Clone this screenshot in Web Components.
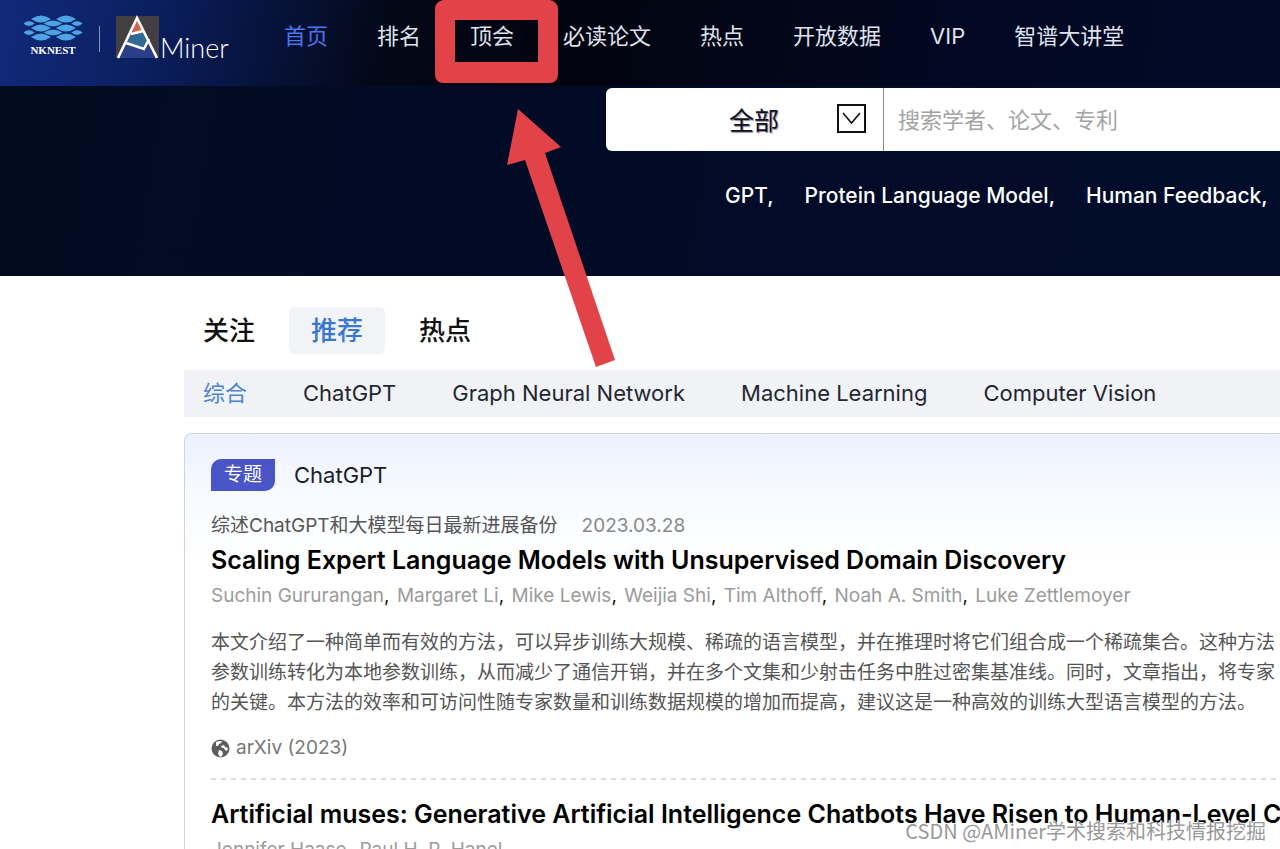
<!DOCTYPE html>
<html lang="zh-CN">
<head>
<meta charset="utf-8">
<title>AMiner</title>
<style>
  body { margin: 0; font-family: Inter, "Noto Sans CJK SC", sans-serif; background: #fff; color: #111; }
</style>
</head>
<body>
<aminer-page></aminer-page>
<script>
const define = (name, html, setup) => {
  const template = document.createElement('template');
  template.innerHTML = html;
  customElements.define(name, class extends HTMLElement {
    constructor() {
      super();
      this.attachShadow({ mode: 'open' }).append(template.content.cloneNode(true));
    }
    connectedCallback() { if (setup) setup(this.shadowRoot, this); }
  });
};

define('brand-logos', `
<style>
  :host { display: flex; align-items: flex-start; }
  svg { display: block; flex: none; }
  a { display: flex; color: #fff; text-decoration: none; }
  .nest { flex-direction: column; align-items: center; width: 60px; margin-top: 15px; }
  .nest span { font: 900 11px/16px "Liberation Serif", serif; margin-top: 1px; }
  i { width: 1px; height: 26px; margin: 26px 16px 0; background: #8b93b8; }
  .am { margin-top: 15px; }
  .am span { font: 300 27px/32px Lato, sans-serif; margin-top: 17px; }
</style>
<a class="nest" href="#"><svg width="60" height="26" viewBox="0 0 60 26" fill="#4ea3e6">
  <path d="M8 4Q18-3 28 4Q18 11 8 4M33 4Q43-3 53 4Q43 11 33 4M0 8.500Q6 3 12 8.500Q6 14 0 8.500M20 8.500Q30 2 40 8.500Q30 15 20 8.500M48 8.500Q54 3 60 8.500Q54 14 48 8.500M8 13Q18 6 28 13Q18 20 8 13M33 13Q43 6 53 13Q43 20 33 13M0 17.500Q6 12 12 17.500Q6 23 0 17.500M20 17.500Q30 11 40 17.500Q30 24 20 17.500M48 17.500Q54 12 60 17.500Q54 23 48 17.500M8 22Q18 15 28 22Q18 29 8 22M33 22Q43 15 53 22Q43 29 33 22"/>
  <path d="M0 8.500Q6 3 12 8.500Q6 14 0 8.500M20 8.500Q30 2 40 8.500Q30 15 20 8.500M48 8.500Q54 3 60 8.500Q54 14 48 8.500M0 17.500Q6 12 12 17.500Q6 23 0 17.500M20 17.500Q30 11 40 17.500Q30 24 20 17.500M48 17.500Q54 12 60 17.500Q54 23 48 17.500" fill="none" stroke="#10286c" stroke-width="0.700"/>
</svg><span>NKNEST</span></a>
<i></i>
<a class="am" href="#"><svg width="44" height="44" viewBox="0 0 44 44">
  <path d="M0 1H43V43H0Z" fill="#443f42"/>
  <path d="M21 4L28 18L15 20Z" fill="#d9604a"/><path d="M15 20L28 17L32 27L28 35L10 30Z" fill="#2f6b94"/>
  <path d="M10 29L28 34L33 28L40 43H3Z" fill="#2b3e86"/>
  <path d="M2 43L21 3L41 43M15 19L27 16M10 28L28 34L33 24" fill="none" stroke="#fff" stroke-width="2.600"/>
</svg><span>Miner</span></a>`);

define('site-nav', `
<style>
  :host { display: block; }
  nav { display: flex; gap: 49px; }
  a { color: #dfe2ec; font-size: 22px; line-height: 32px; white-space: nowrap; text-decoration: none; }
  a[aria-current] { color: #4a74f0; }
</style>
<nav><a href="#" aria-current="page">首页</a><a href="#">排名</a><a href="#">顶会</a><a href="#">必读论文</a><a href="#">热点</a><a href="#">开放数据</a><a href="#">VIP</a><a href="#">智谱大讲堂</a></nav>`);

define('search-bar', `
<style>
  :host { display: flex; height: 63px; background: #fff; border-radius: 6px 0 0 6px; overflow: hidden; }
  .scope { display: grid; width: 277px; flex: none; border-right: 1px solid #8a8c94; align-items: center; }
  .scope > * { grid-area: 1 / 1; }
  select { appearance: none; border: 0; outline: 0; background: none; width: 100%; height: 100%; padding: 3px 0 0 123px; font: 25px Inter, "Noto Sans CJK SC", sans-serif; color: #10131f; text-shadow: 1px 1px 1px #8888a0; }
  svg { justify-self: end; margin: 0 17px 2px 0; pointer-events: none; }
  input { flex: 1; min-width: 0; border: 0; outline: 0; padding: 1px 14px 0; font: 22px Inter, "Noto Sans CJK SC", sans-serif; }
  input::placeholder { color: #a3a3a3; opacity: 1; }
</style>
<div class="scope"><select aria-label="搜索范围"><option>全部</option></select>
<svg width="29" height="29" viewBox="0 0 29 29" fill="none" stroke="#111" stroke-width="2"><path d="M1 1H28V28H1Z"/><path d="M6 9L14.500 19L23 9" stroke-width="1.600"/></svg></div>
<input type="search" aria-label="搜索" placeholder="搜索学者、论文、专利">`);

define('site-header', `
<style>
  :host { display: block; height: 276px; overflow: hidden; background: linear-gradient(100deg, #020c20 0, #020b26 50%, #020d2c 100%); }
  .bar { display: flex; height: 86px; background: linear-gradient(100deg, #11297a 0, #0b1f5f 12%, #071440 20%, #030818 30%, #02040f 45%, #020822 75%, #020a28 100%); }
  brand-logos { flex: none; width: 261px; padding-left: 23px; }
  site-nav { margin-top: 20px; }
  search-bar { margin: 2px 0 0 606px; }
  .hot { display: flex; gap: 31px; margin: 31px 0 0 725px; }
  .hot a { color: #fff; font-size: 21px; font-weight: 500; line-height: 28px; white-space: nowrap; text-decoration: none; }
</style>
<div class="bar"><brand-logos></brand-logos><site-nav></site-nav></div>
<search-bar></search-bar>
<div class="hot"><a href="#">GPT,</a><a href="#">Protein Language Model,</a><a href="#">Human Feedback,</a></div>`);

define('feed-tabs', `
<style>
  :host { display: block; padding-top: 31px; }
  .main { display: flex; gap: 12px; }
  button { font: 500 26px/47px Inter, "Noto Sans CJK SC", sans-serif; color: #111; background: none; border: 0; border-radius: 6px; padding: 0 22px; }
  .main button:first-child { padding-left: 19px; }
  .main .on { background: #f1f3f7; color: #3a78d0; }
  .sub { display: flex; gap: 56px; margin-top: 16px; padding-left: 19px; background: #f1f2f6; }
  .sub a { font-size: 22px; line-height: 47px; color: #23262f; text-decoration: none; white-space: nowrap; }
  .sub a.on { color: #4a86cc; }
</style>
<div class="main"><button>关注</button><button class="on">推荐</button><button>热点</button></div>
<nav class="sub"><a class="on" href="#">综合</a><a href="#">ChatGPT</a><a href="#">Graph Neural Network</a><a href="#">Machine Learning</a><a href="#">Computer Vision</a></nav>`);

define('paper-item', `
<style>
  :host { display: block; white-space: nowrap; }
  h2 { margin: 0; font-size: 25px; line-height: 36px; font-weight: 600; color: #000; }
  .authors { font-size: 19px; line-height: 36px; color: #111; }
  .authors a { color: #9b9b9b; text-decoration: none; }
  .authors a + a { margin-left: 2px; }
  .text { margin-top: 14px; font-size: 19px; line-height: 30px; color: #555; }
</style>
<h2><slot name="title"></slot></h2>
<div class="authors"></div>
<div class="text"><slot></slot></div>`, (root, host) => {
  const line = root.querySelector('.authors');
  line.textContent = '';
  host.getAttribute('authors').split('|').forEach((name, i) => {
    if (i) line.append(', ');
    const link = document.createElement('a');
    link.href = '#';
    link.textContent = name;
    line.append(link);
  });
});

define('topic-card', `
<style>
  :host { display: block; margin-top: 16px; padding: 25px 0 0 26px; border: solid #ccd3e6; border-width: 1px 0 0 1px; border-radius: 8px 0 0 0; background: linear-gradient(#edf1fe 0, #f8fbff 70px, #fff 130px); white-space: nowrap; overflow: hidden; }
  .head { display: flex; gap: 19px; align-items: center; }
  .tag { background: #4a56c8; color: #fff; font-size: 19px; line-height: 32px; padding: 0 13px; border-radius: 10px 0 10px 0; }
  .topic { font-size: 22px; color: #1b1e28; }
  .meta { display: flex; gap: 24px; margin-top: 19px; font-size: 19px; line-height: 32px; color: #555; }
  time { color: #888; }
  .src { display: flex; gap: 6px; align-items: center; margin-top: 16px; font-size: 19px; line-height: 28px; color: #777; }
  .src svg { flex: none; }
  hr { margin: 16px 0; border: 0; height: 2px; background: repeating-linear-gradient(90deg, #ddd 0 5px, transparent 5px 10px); }
</style>
<div class="head"><span class="tag">专题</span><span class="topic">ChatGPT</span></div>
<div class="meta"><span>综述ChatGPT和大模型每日最新进展备份</span><time>2023.03.28</time></div>
<paper-item authors="Suchin Gururangan|Margaret Li|Mike Lewis|Weijia Shi|Tim Althoff|Noah A. Smith|Luke Zettlemoyer"><span slot="title">Scaling Expert Language Models with Unsupervised Domain Discovery</span>本文介绍了一种简单而有效的方法，可以异步训练大规模、稀疏的语言模型，并在推理时将它们组合成一个稀疏集合。这种方法<br>参数训练转化为本地参数训练，从而减少了通信开销，并在多个文集和少射击任务中胜过密集基准线。同时，文章指出，将专家<br>的关键。本方法的效率和可访问性随专家数量和训练数据规模的增加而提高，建议这是一种高效的训练大型语言模型的方法。</paper-item>
<div class="src"><svg width="19" height="19" viewBox="0 0 19 19"><circle cx="9.500" cy="9.500" r="9" fill="#5c5c5c"/><path d="M6 2Q9 1 12 2L10 4L8 5L7 4ZM1 7L3 7L5 9L8 10L9 12L7 14L6 17Q1 14 1 8ZM10 7L13 6L17 7L18 10L15 12L13 16L12 15L12 12L10 10Z" fill="#5c5c5c"/><path d="M5 3L8 2L11 2L10 4L8 5L7 7L5 7ZM10 7L13 6L14 8L17 9L16 12L14 11L13 9L11 9ZM8 11L11 12L12 15L10 18L8 17L7 14Z" fill="#fff"/></svg>arXiv (2023)</div>
<hr>
<paper-item authors="Jennifer Haase|Paul H. P. Hanel"><span slot="title">Artificial muses: Generative Artificial Intelligence Chatbots Have Risen to Human-Level Creativity</span></paper-item>`);

define('aminer-page', `
<style>
  :host { display: block; position: relative; height: 100vh; overflow: hidden; }
  main { margin-left: 184px; }
  .mark { position: absolute; left: 0; top: 0; pointer-events: none; }
  .water { position: absolute; right: 14px; bottom: 4px; font: 20px/28px "Noto Sans CJK SC", sans-serif; color: #999; text-shadow: 1px 1px 0 #fff, -1px -1px 0 #fff; }
</style>
<site-header></site-header>
<main><feed-tabs></feed-tabs><topic-card></topic-card></main>
<svg class="mark" width="640" height="380" viewBox="0 0 640 380" fill="#e24348">
  <path fill-rule="evenodd" d="M443 0H550Q558 2 558 9V74Q558 83 549 83H444Q435 83 435 74V9Q435 2 443 0ZM455 20V62H538V20Z"/>
  <path d="M518 109L561 147L545 153L615 360L596 367L525 160L507 165Z"/>
</svg>
<div class="water">CSDN @AMiner学术搜索和科技情报挖掘</div>`);
</script>
</body>
</html>
